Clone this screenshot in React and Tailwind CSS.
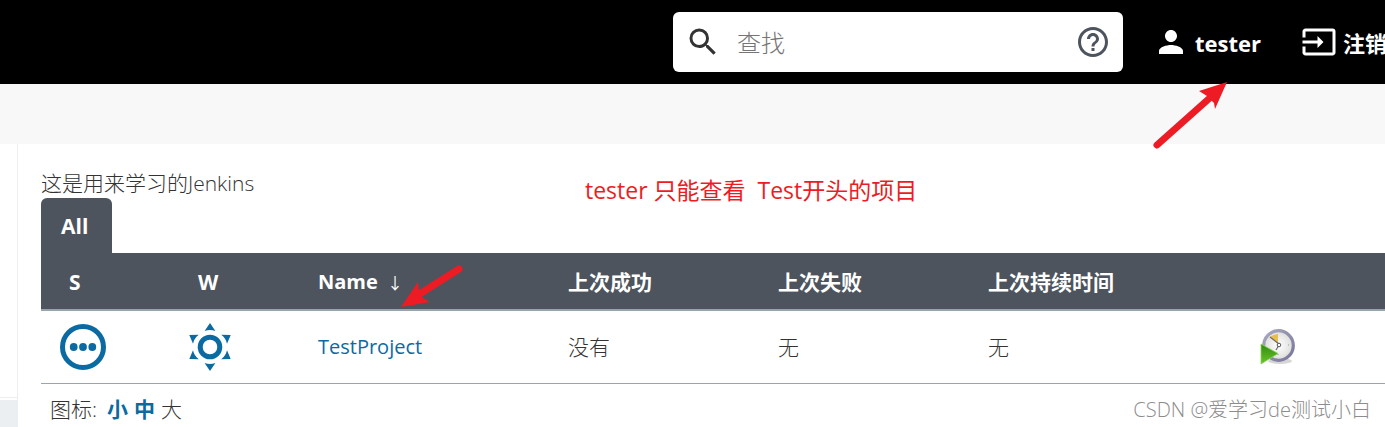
import { useState } from 'react'
import { MdHelpOutline, MdInput, MdPerson, MdSearch } from 'react-icons/md'

const jobs = [
  { name: 'TestProject', lastSuccess: '没有', lastFailure: '无', lastDuration: '无' },
]

function PendingIcon() {
  return (
    <svg width="48" height="48" viewBox="0 0 48 48" fill="#0b6aa2" role="img" aria-label="Not built">
      <circle cx="24" cy="24" r="20.5" fill="none" stroke="#0b6aa2" strokeWidth="5" />
      <circle cx="14.7" cy="24" r="3.9" />
      <circle cx="24" cy="24" r="3.9" />
      <circle cx="33.3" cy="24" r="3.9" />
    </svg>
  )
}

function SunnyIcon() {
  return (
    <svg width="48" height="48" viewBox="0 0 48 48" fill="#0b6aa2" role="img" aria-label="100%">
      <circle cx="24" cy="24" r="9.8" fill="none" stroke="#0b6aa2" strokeWidth="5" />
      <path d="M24 0l5.4 8q-5.4-2-10.8 0z" />
      <path d="M24 48l5.4-8q-5.4 2-10.8 0z" />
      <path d="M3.3 12l9.5-.2q-4.6 3.4-5.8 9z" />
      <path d="M44.7 12l-9.5-.2q4.600 3.400 5.800 9z" />
      <path d="M3.3 36l9.500.2q-4.600-3.400-5.800-9z" />
      <path d="M44.7 36l-9.500.2q4.600-3.400 5.800-9z" />
    </svg>
  )
}

function ScheduleIcon() {
  return (
    <svg width="36" height="38" viewBox="0 0 36 38" aria-hidden="true">
      <defs>
        <radialGradient id="face">
          <stop offset="0" stopColor="#ffffff" />
          <stop offset="1" stopColor="#dcdcda" />
        </radialGradient>
        <linearGradient id="rim" x1="0" y1="0" x2="1" y2="1">
          <stop offset="0" stopColor="#a9a9c0" />
          <stop offset="1" stopColor="#77759a" />
        </linearGradient>
        <linearGradient id="play" x1="0" y1="0" x2="0" y2="1">
          <stop offset="0" stopColor="#2f8a10" />
          <stop offset="1" stopColor="#6cc52a" />
        </linearGradient>
      </defs>
      <ellipse cx="20" cy="33" rx="12" ry="3" fill="#d6d6d6" />
      <circle cx="18.5" cy="17.5" r="14.8" fill="url(#face)" stroke="url(#rim)" strokeWidth="3.2" />
      <path d="M18 15.500L10 9q4-3 8-3z" fill="#e9bf4c" />
      <path d="M10 9l9 7M19 17l-3 5" stroke="#6b6b6b" strokeWidth="1.200" fill="none" />
      <circle cx="19" cy="17" r="1.800" fill="#ffffff" stroke="#555555" strokeWidth="1" />
      <path d="M28 17h1M18 27v-1" stroke="#9c9c9c" strokeWidth="1.200" />
      <path d="M1 16l17 9.500L1 36z" fill="url(#play)" stroke="#8fd25e" strokeWidth=".8" />
    </svg>
  )
}

export default function App() {
  const [query, setQuery] = useState('')

  return (
    <div className="relative overflow-hidden bg-white font-['Open_Sans','Noto_Sans_CJK_SC',sans-serif] text-[21px] leading-7 text-[#333333]">
      {/* Header */}
      <header className="flex h-21 items-center justify-end overflow-hidden bg-black text-[22px] font-bold text-white">
        <form className="flex h-15 w-[450px] shrink-0 items-center rounded-md bg-white px-3" onSubmit={(e) => e.preventDefault()}>
          <label htmlFor="search" aria-label="查找">
            <MdSearch size={36} color="#333333" />
          </label>
          <input
            id="search"
            value={query}
            onChange={(e) => setQuery(e.target.value)}
            placeholder="查找"
            className="min-w-0 flex-1 px-4 pt-0.5 text-2xl font-light outline-none placeholder:text-[#757575]"
          />
          <a href="#help" aria-label="Help">
            <MdHelpOutline size={36} color="#4d545d" />
          </a>
        </form>
        <a href="#user" className="ml-[30px] flex shrink-0 items-center gap-1.5">
          <MdPerson size={36} />
          <span className="pt-0.5">tester</span>
        </a>
        <a href="#logout" className="-mr-0.5 ml-10 flex shrink-0 items-center gap-1.5">
          <MdInput size={36} />
          <span className="pt-0.5">注销</span>
        </a>
      </header>

      {/* Breadcrumb bar */}
      <div className="h-15 bg-[#f8f8f8]" />

      <div className="flex">
        {/* Side panel edge */}
        <aside className="flex w-[18px] shrink-0 flex-col justify-end border-r border-[#ebeff2]">
          <div className="border-t border-[#ebeff2] pt-0.5">
            <div className="h-7 bg-[#ebeff2]" />
          </div>
        </aside>

        <main className="min-w-0 flex-1 pt-[25px] pl-[23px]">
          <p className="pb-px font-light">这是用来学习的Jenkins</p>

          <div className="flex">
            <a href="#all" className="rounded-t-md bg-[#4d545d] pt-3.5 pr-6 pb-[13px] pl-5 font-bold text-white">
              All
            </a>
          </div>

          <table className="w-full table-fixed border-collapse text-left">
            <colgroup>
              <col className="w-[129px]" />
              <col className="w-[120px]" />
              <col className="w-[250px]" />
              <col className="w-[210px]" />
              <col className="w-[210px]" />
              <col />
              <col className="w-[153px]" />
            </colgroup>
            <thead>
              <tr className="h-[57px] border-b-2 border-[#98a5ae] bg-[#4d545d] text-white">
                <th className="pt-0.5 pl-7">S</th>
                <th className="pt-0.5 pl-7">W</th>
                <th className="pt-0.5 pl-7 text-xl">
                  Name <span className="ml-1 text-base font-normal">↓</span>
                </th>
                <th className="pt-0.5 pl-7">上次成功</th>
                <th className="pt-0.5 pl-7">上次失败</th>
                <th className="pt-0.5 pl-7">上次持续时间</th>
                <th className="pt-0.5 pl-7" aria-label="Build" />
              </tr>
            </thead>
            <tbody>
              {jobs.map((job) => (
                <tr key={job.name} className="h-[73px] border-b border-[#98a5ae] font-light">
                  <td className="pl-[18px]"><PendingIcon /></td>
                  <td className="pl-4"><SunnyIcon /></td>
                  <td className="pl-7">
                    <a href="#job" className="text-xl font-medium text-[#0b6aa2]">{job.name}</a>
                  </td>
                  <td className="pl-7">{job.lastSuccess}</td>
                  <td className="pl-7">{job.lastFailure}</td>
                  <td className="pl-7">{job.lastDuration}</td>
                  <td className="pl-7">
                    <button type="button" aria-label="Build" className="block"><ScheduleIcon /></button>
                  </td>
                </tr>
              ))}
            </tbody>
          </table>

          {/* Icon size */}
          <div className="flex gap-1.5 pt-[11px] pb-[5px] pl-[9px] font-light">
            <span className="mr-1">图标:</span>
            <a href="#small" className="font-bold text-[#0b6aa2]">小</a>
            <a href="#medium" className="font-bold text-[#0b6aa2]">中</a>
            <span>大</span>
          </div>
        </main>
      </div>

      {/* Annotations */}
      <p className="absolute top-44 left-[585px] text-[23px] whitespace-pre text-[#ed1c24]">tester 只能查看  Test开头的项目</p>
      <svg className="absolute top-20 right-[156px]" width="76" height="70" fill="#ed1c24" aria-hidden="true">
        <path d="M4 65L59 16" stroke="#ed1c24" strokeWidth="7" strokeLinecap="round" />
        <path d="M74 2L46 11l8 5 7 7 1 6z" />
      </svg>
      <svg className="absolute top-[264px] left-[398px]" width="68" height="46" fill="#ed1c24" aria-hidden="true">
        <path d="M61 5L20 31" stroke="#ed1c24" strokeWidth="7" strokeLinecap="round" />
        <path d="M3 43L20 18l1 10 4 6 7 4z" />
      </svg>
      <p className="absolute right-3.5 bottom-1 text-xl font-light text-[#8c8c8c]">CSDN @爱学习de测试小白</p>
    </div>
  )
}
